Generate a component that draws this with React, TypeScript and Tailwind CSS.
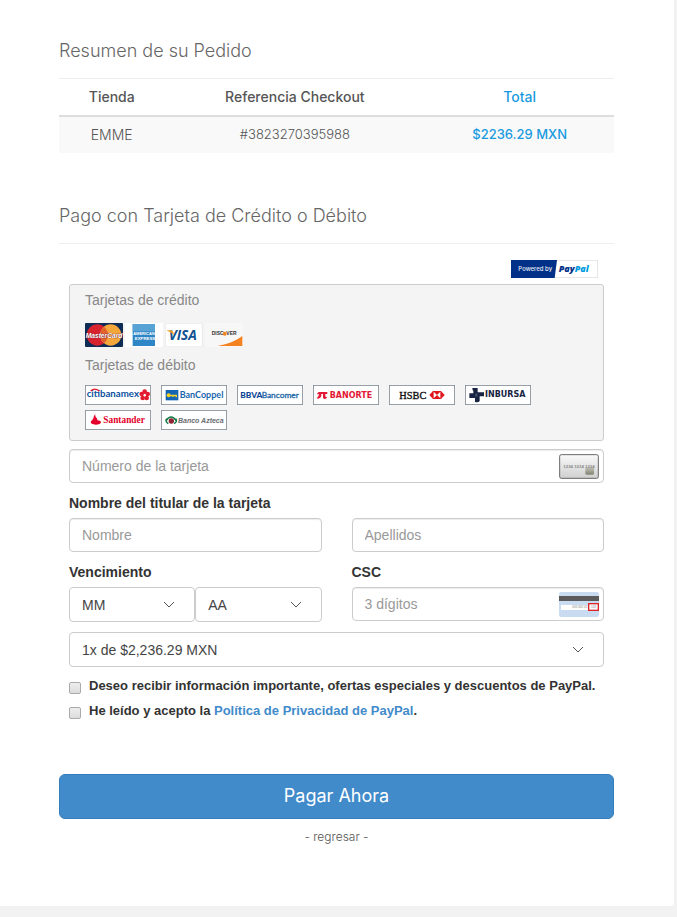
import React, { useState } from 'react';
import { clsx } from 'clsx';

const headingFont = 'font-[Inter,Raleway,sans-serif]';

const inputClass =
  'block h-[34px] w-full rounded border border-[#ccc] bg-white px-3 text-sm text-[#444] shadow-[inset_0_1px_1px_rgba(0,0,0,0.075)] placeholder:text-[#999] focus:border-[#66afe9] focus:outline-none';

const PayPalBadge: React.FC = () => (
  <svg viewBox="0 0 261 54" className="h-[18px] w-[87px]" role="img" aria-label="Powered by PayPal">
    <rect x="1" y="1" width="259" height="52" fill="#fff" stroke="#dcdcdc" strokeWidth="2" />
    <path d="M0 0H138L131 54H0Z" fill="#003087" />
    <text x="22" y="33" fontSize="18" fontWeight="500" fill="#e6ecf7" fontFamily="Inter, sans-serif">
      Powered by
    </text>
    <text x="143" y="36" fontSize="27" fontWeight="800" fontStyle="italic" fontFamily="Open Sans, sans-serif">
      <tspan fill="#003087">Pay</tspan>
      <tspan fill="#009cde">Pal</tspan>
    </text>
  </svg>
);

const CreditCards: React.FC = () => (
  <div className="flex gap-0.5">
    <svg viewBox="0 0 114 72" className="h-6 w-[38px]" role="img" aria-label="MasterCard">
      <rect width="114" height="72" rx="3" fill="#0f2c56" />
      <circle cx="37" cy="36" r="32" fill="#d8232f" />
      <circle cx="77" cy="36" r="32" fill="#f5a73b" />
      <path d="M57 11a32 32 0 0 1 0 50a32 32 0 0 1 0-50Z" fill="#e2622e" />
      <text x="57" y="44" textAnchor="middle" fontSize="20" fontWeight="bold" fontStyle="italic" fill="#fff" stroke="#7a2430" strokeWidth="2" paintOrder="stroke" fontFamily="Liberation Sans, sans-serif">
        MasterCard
      </text>
    </svg>
    <svg viewBox="0 0 114 72" className="h-6 w-[38px]" role="img" aria-label="American Express">
      <rect width="114" height="72" rx="3" fill="#fff" />
      <rect x="23" y="3" width="67" height="66" fill="#2f86c6" />
      <path d="M23 3H90V25H23Z" fill="#58a3d6" />
      <g fontWeight="bold" textAnchor="middle" fill="#fff" fontFamily="Liberation Sans, sans-serif">
        <text x="57" y="37" fontSize="12">AMERICAN</text>
        <text x="60" y="50" fontSize="13">EXPRESS</text>
      </g>
    </svg>
    <svg viewBox="0 0 114 72" className="h-6 w-[38px]" role="img" aria-label="VISA">
      <rect x="1" y="1" width="111" height="70" rx="3" fill="#fff" stroke="#e4e4e4" strokeWidth="2" />
      <text x="11" y="51" fontSize="41" fontWeight="700" fontStyle="italic" fill="#10518f" fontFamily="Open Sans, sans-serif">
        VISA
      </text>
      <path d="M6 22H19Q24 23 25 28L27 37Q19 26 6 23Z" fill="#f2a12c" />
    </svg>
    <svg viewBox="0 0 114 72" className="h-6 w-[38px]" role="img" aria-label="Discover">
      <rect width="114" height="72" rx="3" fill="#f7f7f7" />
      <path d="M38 69Q84 61 112 39V69Z" fill="#f58220" />
      <g fontSize="15" fontWeight="bold" fill="#333" fontFamily="Liberation Sans, sans-serif">
        <text x="20" y="37">DISC</text>
        <text x="64" y="37">VER</text>
      </g>
      <circle cx="59" cy="32" r="6" fill="#f58220" />
    </svg>
  </div>
);

const BankLogo: React.FC<{ name: string; children: React.ReactNode }> = ({ name, children }) => (
  <svg viewBox="0 0 198 60" className="h-5 w-[66px]" role="img" aria-label={name}>
    <rect x="1" y="1" width="196" height="58" fill="#fff" stroke="#858d99" strokeWidth="3" />
    {children}
  </svg>
);

const DebitCards: React.FC = () => (
  <div className="flex flex-wrap gap-x-2.5 gap-y-[5px]">
    <BankLogo name="Citibanamex">
      <text x="5" y="37" fontSize="29" fontWeight="700" fill="#0b4f9e" fontFamily="Lato, sans-serif">
        citibanamex
      </text>
      <path d="M17 18Q29 7 43 18" fill="none" stroke="#e31b2f" strokeWidth="4" />
      <g fill="#e31b2f">
        <circle cx="179" cy="20" r="7" />
        <circle cx="188" cy="27" r="7" />
        <circle cx="185" cy="39" r="7" />
        <circle cx="173" cy="39" r="7" />
        <circle cx="170" cy="27" r="7" />
      </g>
      <circle cx="179" cy="31" r="3" fill="#fff" />
    </BankLogo>
    <BankLogo name="BanCoppel">
      <rect x="14" y="15" width="38" height="31" fill="#1464b4" />
      <circle cx="23" cy="31" r="6" fill="#f5d327" />
      <path d="M28 29H48V37H44V34H38V36H34V34H28Z" fill="#f5d327" />
      <text x="56" y="39" fontSize="27" fontWeight="700" fill="#1767ad" fontFamily="Lato, sans-serif">
        BanCoppel
      </text>
    </BankLogo>
    <BankLogo name="BBVA Bancomer">
      <text x="10" y="39" fontSize="25" fontWeight="900" fill="#0a4595" fontFamily="Lato, sans-serif">
        BBVA
      </text>
      <text x="74" y="39" fontSize="25" fill="#2467a9" stroke="#2467a9" strokeWidth="1" fontFamily="Lato, sans-serif">
        Bancomer
      </text>
    </BankLogo>
    <BankLogo name="Banorte">
      <path d="M17 21H43V27H37V34Q38 37 43 35Q40 43 33 42Q29 41 30 34V27H25V32Q24 39 13 42V36Q18 35 18 28H12Q13 23 17 21Z" fill="#e31937" />
      <text x="50" y="40" fontSize="24" fontWeight="bold" fill="#e31937" fontFamily="DejaVu Sans, sans-serif">
        BANORTE
      </text>
    </BankLogo>
    <BankLogo name="HSBC">
      <text x="31" y="41" fontSize="31" fill="#111" stroke="#111" strokeWidth="1" fontFamily="Liberation Serif, serif">
        HSBC
      </text>
      <path d="M121 30L132 18H156L167 30L156 42H132Z" fill="#e0171e" />
      <path d="M134 20L144 30L134 40ZM154 20L144 30L154 40Z" fill="#fff" />
    </BankLogo>
    <BankLogo name="Inbursa">
      <path d="M22 9H38V22H57V34H44V48Q41 53 30 51V39H13V25H25V18Q22 16 22 9Z" fill="#172442" />
      <path d="M31 26H37V35H31Z" fill="#46516a" />
      <text x="60" y="35" fontSize="24" fontWeight="bold" fill="#172442" fontFamily="DejaVu Sans, sans-serif">
        INBURSA
      </text>
    </BankLogo>
    <BankLogo name="Santander">
      <path d="M32 11Q28 17 35 24Q38 28 37 31Q48 32 48 37Q47 44 32 44Q17 43 17 36Q18 31 23 30Q25 35 31 38Q32 32 27 27Q23 20 32 11Z" fill="#e4002b" />
      <path d="M22 31Q23 25 27 23Q29 29 32 33Q35 36 33 40Q23 39 22 31Z" fill="#e4002b" />
      <text x="55" y="39" fontSize="28" fontWeight="bold" fill="#e4002b" fontFamily="Liberation Serif, serif">
        Santander
      </text>
    </BankLogo>
    <BankLogo name="Banco Azteca">
      <path d="M15 32Q30 10 46 32" fill="none" stroke="#157a4a" strokeWidth="5" />
      <path d="M22 41Q11 34 17 26M39 41Q51 34 44 26" fill="none" stroke="#157a4a" strokeWidth="4" />
      <circle cx="31" cy="33" r="8" fill="#8f2532" />
      <text x="51" y="39" fontSize="21" fontWeight="bold" fontStyle="italic" fill="#6a6d70" fontFamily="Liberation Sans, sans-serif">
        Banco Azteca
      </text>
    </BankLogo>
  </div>
);

const CardNumberIcon: React.FC = () => (
  <svg viewBox="0 0 120 75" className="h-[25px] w-10" aria-hidden="true">
    <defs>
      <linearGradient id="cardFace" x1="0" y1="0" x2="0" y2="1">
        <stop offset="0" stopColor="#fafafa" />
        <stop offset="1" stopColor="#cfcfcf" />
      </linearGradient>
      <linearGradient id="cardChip" x1="0" y1="0" x2="0" y2="1">
        <stop offset="0" stopColor="#c3c4b6" />
        <stop offset="1" stopColor="#828373" />
      </linearGradient>
    </defs>
    <rect x="2" y="2" width="116" height="71" rx="5" fill="url(#cardFace)" stroke="#666" strokeWidth="3" />
    <rect x="79" y="40" width="26" height="22" rx="4" fill="url(#cardChip)" />
    <text x="13" y="41" fontSize="13" fontWeight="bold" fill="#888" fontFamily="Liberation Sans, sans-serif">
      1234 1234 1234
    </text>
  </svg>
);

const CscIcon: React.FC = () => (
  <svg viewBox="0 0 120 75" className="h-[25px] w-10" aria-hidden="true">
    <rect width="120" height="75" rx="7" fill="#c9dbf1" />
    <rect y="12" width="120" height="15" fill="#5b5b5b" />
    <rect x="6" y="39" width="81" height="15" fill="#fff" />
    <rect x="89" y="35" width="29" height="20" fill="#fff" stroke="#dc2428" strokeWidth="4" />
    <g fontSize="9" fontStyle="italic" fill="#888" fontFamily="Liberation Sans, sans-serif">
      <text x="40" y="49">000 000 00</text>
      <text x="96" y="49">123</text>
    </g>
  </svg>
);

interface SelectFieldProps {
  label: string;
  options: string[];
}

const SelectField: React.FC<SelectFieldProps> = ({ label, options }) => (
  <div className="relative min-w-0 flex-1">
    <select
      aria-label={label}
      className="block h-[35px] w-full appearance-none rounded border border-[#ccc] bg-white px-3 pt-0.5 text-sm text-[#444] focus:border-[#66afe9] focus:outline-none"
    >
      {options.map((option) => (
        <option key={option}>{option}</option>
      ))}
    </select>
    <svg viewBox="0 0 12 7" className="pointer-events-none absolute top-3.5 right-5 h-[7px] w-3" aria-hidden="true">
      <path d="M1 1L6 6L11 1" fill="none" stroke="#555" />
    </svg>
  </div>
);

const checkboxClass =
  'mt-1 h-3 w-3 shrink-0 appearance-none rounded-[2px] border border-[#aaa] bg-linear-to-b from-[#eee] to-[#dcdcdc] checked:from-[#428bca] checked:to-[#428bca]';

const App: React.FC = () => {
  const [offers, setOffers] = useState(false);
  const [accepted, setAccepted] = useState(false);

  return (
    <div className="min-h-screen bg-[#f2f2f2] pr-[3px] pb-[11px] font-['Liberation_Sans',Arial,sans-serif] text-sm text-[#333]">
      <main className="rounded-br bg-white pt-[41px] pr-[60px] pb-[59px] pl-[59px]">
        {/* Order summary */}
        <section>
          <h2 className={clsx(headingFont, 'text-lg leading-5 font-light text-[#666]')}>Resumen de su Pedido</h2>
          <table className={clsx(headingFont, 'mt-[17px] w-full table-fixed border-t border-[#eee] text-center text-[#555]')}>
            <thead>
              <tr className="h-[37px] border-b-2 border-[#ddd]">
                <th className="w-[19%] font-medium">Tienda</th>
                <th className="w-[47%] font-medium">Referencia Checkout</th>
                <th className="w-[34%] font-medium text-[#1a9be0]">Total</th>
              </tr>
            </thead>
            <tbody>
              <tr className="h-[37px] bg-[#f9f9f9]">
                <td className="font-light">EMME</td>
                <td className="text-[13px] font-light">#3823270395988</td>
                <td className="text-[13px] font-medium text-[#1a9be0]">$2236.29 MXN</td>
              </tr>
            </tbody>
          </table>
        </section>

        {/* Payment form */}
        <form onSubmit={(e) => e.preventDefault()}>
          <h2 className={clsx(headingFont, 'mt-[53px] border-b border-[#eee] pb-[17px] text-lg leading-5 font-light text-[#666]')}>
            Pago con Tarjeta de Crédito o Débito
          </h2>

          <div className="px-2.5 pt-4">
            <div className="flex justify-end pr-1.5">
              <PayPalBadge />
            </div>

            <div className="mt-1.5 rounded-[3px] border border-[#ccc] bg-[#f4f4f4] px-[15px] pt-[5px] pb-2.5 text-[#888]">
              <p className="leading-5">Tarjetas de crédito</p>
              <div className="mt-[13px]">
                <CreditCards />
              </div>
              <p className="mt-2 mb-2.5 leading-5">Tarjetas de débito</p>
              <DebitCards />
            </div>

            <div className="relative mt-2">
              <input type="text" aria-label="Número de la tarjeta" placeholder="Número de la tarjeta" className={inputClass} />
              <span className="pointer-events-none absolute top-[5px] right-[5px]">
                <CardNumberIcon />
              </span>
            </div>

            <fieldset className="mt-2.5">
              <legend className="mb-[5px] leading-5 font-bold">Nombre del titular de la tarjeta</legend>
              <div className="grid grid-cols-2 gap-[30px]">
                <input type="text" aria-label="Nombre" placeholder="Nombre" className={inputClass} />
                <input type="text" aria-label="Apellidos" placeholder="Apellidos" className={inputClass} />
              </div>
            </fieldset>

            <div className="mt-2.5 grid grid-cols-2 gap-[30px]">
              <fieldset className="min-w-0">
                <legend className="mb-[5px] leading-5 font-bold">Vencimiento</legend>
                <div className="flex">
                  <SelectField label="Mes de vencimiento" options={['MM', '01', '02', '03', '04', '05', '06', '07', '08', '09', '10', '11', '12']} />
                  <SelectField label="Año de vencimiento" options={['AA', '18', '19', '20', '21', '22', '23', '24', '25']} />
                </div>
              </fieldset>
              <div className="min-w-0">
                <label htmlFor="csc" className="mb-[5px] block leading-5 font-bold">
                  CSC
                </label>
                <div className="relative">
                  <input id="csc" type="text" placeholder="3 dígitos" className={inputClass} />
                  <span className="pointer-events-none absolute top-[5px] right-[5px]">
                    <CscIcon />
                  </span>
                </div>
              </div>
            </div>

            <div className="mt-2.5 flex">
              <SelectField label="Mensualidades" options={['1x de $2,236.29 MXN']} />
            </div>

            <div className="mt-[9px] flex flex-col gap-[5px] text-[13px] leading-5 font-bold">
              <div className="flex items-center gap-2">
                <input id="offers" type="checkbox" checked={offers} onChange={(e) => setOffers(e.target.checked)} className={checkboxClass} />
                <label htmlFor="offers">
                  Deseo recibir información importante, ofertas especiales y descuentos de PayPal.
                </label>
              </div>
              <div className="flex items-center gap-2">
                <input id="privacy" type="checkbox" checked={accepted} onChange={(e) => setAccepted(e.target.checked)} className={checkboxClass} />
                <label htmlFor="privacy">
                  He leído y acepto la <a href="#privacidad" className="text-[#428bca]">Política de Privacidad de PayPal</a>.
                </label>
              </div>
            </div>
          </div>

          <button
            type="submit"
            className={clsx(headingFont, 'mt-[53px] block h-[45px] w-full rounded-md border border-[#357ebd] bg-[#428bca] text-lg text-white')}
          >
            Pagar Ahora
          </button>
        </form>

        <p className={clsx(headingFont, 'mt-2 text-center text-xs leading-5 font-light')}>
          <a href="#regresar" className="text-[#555]">- regresar -</a>
        </p>
      </main>
    </div>
  );
};

export default App;
